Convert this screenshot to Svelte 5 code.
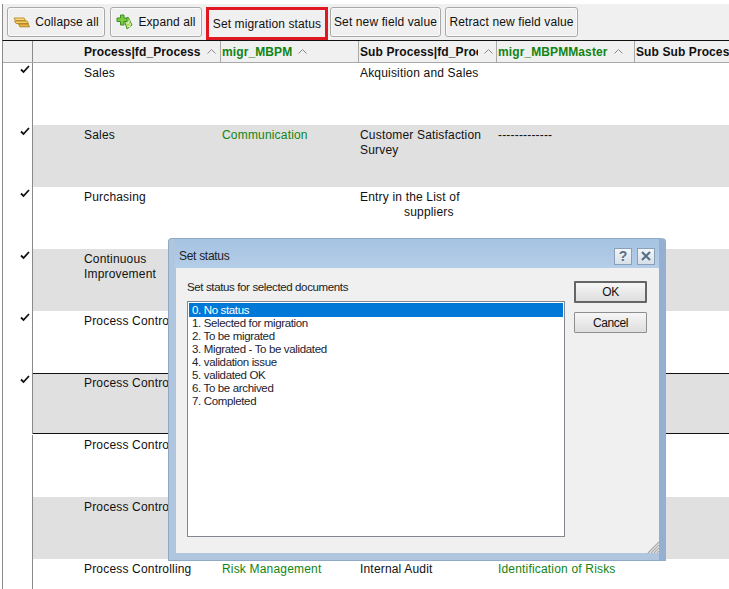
<script>
	const columns = [
		{ label: 'Process|fd_Process', width: 188, pad: 51 },
		{ label: 'migr_MBPM', width: 138, green: true },
		{ label: 'Sub Process|fd_Proc', width: 138 },
		{ label: 'migr_MBPMMaster', width: 138, green: true },
		{ label: 'Sub Sub Process', width: 120, noSort: true }
	];

	const rows = [
		{ a: 'Sales', c: 'Akquisition and Sales' },
		{ a: 'Sales', b: 'Communication', c: 'Customer Satisfaction Survey', dash: '-------------' },
		{ a: 'Purchasing', c: 'Entry in the List of', c2: 'suppliers' },
		{ a: 'Continuous Improvement' },
		{ a: 'Process Controlling' },
		{ a: 'Process Controlling', selected: true },
		{ a: 'Process Controlling', noCheck: true },
		{ a: 'Process Controlling', noCheck: true },
		{ a: 'Process Controlling', b: 'Risk Management', c: 'Internal Audit', d: 'Identification of Risks', noCheck: true }
	];

	const statuses = [
		'0. No status',
		'1. Selected for migration',
		'2. To be migrated',
		'3. Migrated - To be validated',
		'4. validation issue',
		'5. validated OK',
		'6. To be archived',
		'7. Completed'
	];

	let current = $state(0);
</script>

<div class="page">
	<div class="toolbar">
		<button class="tool collapse" type="button">
			<svg width="17" height="11" viewBox="0 0 17 11">
				<path d="M1 1 H11 L12.5 3.5 H2.5 Z" fill="#f6dc7a" stroke="#b8862a" stroke-width="0.9" />
				<path d="M1.5 4 H14 L15.5 6.5 H3 Z" fill="#f4d060" stroke="#b8862a" stroke-width="0.9" />
				<path d="M5.5 7 H15 L16.5 9.8 H7 Z" fill="#eeb840" stroke="#a87a22" stroke-width="0.9" />
			</svg>
			Collapse all
		</button>
		<button class="tool expand" type="button">
			<svg width="17" height="17" viewBox="0 0 17 17">
				<path d="M8 6 L12 3 L16 11 L11 15 Z" fill="#a6d860" stroke="#4f9a2c" stroke-width="1" />
				<path d="M4.5 1 H8 V4 H11 V7.5 H8 V11 H4.5 V7.5 H1 V4 H4.5 Z" fill="#7ccb3c" stroke="#3f8a2a" stroke-width="1" />
				<path d="M10 8 L12 10 L13.5 6.5 M11.5 12 L13.5 13 L14.5 9.5" fill="none" stroke="#e4f6c0" stroke-width="1" />
			</svg>
			Expand all
		</button>
		<button class="tool active" type="button">Set migration status</button>
		<button class="tool" style="width:111px" type="button">Set new field value</button>
		<button class="tool" style="width:133px" type="button">Retract new field value</button>
	</div>

	<div class="table">
		<div class="head">
			<div class="gutter"></div>
			{#each columns as col}
				<div class="th" class:green={col.green} style="width:{col.width}px;padding-left:{col.pad ?? 1}px">
					<span class="th-label">{col.label}</span>
					{#if !col.noSort}
						<svg class="sort" width="9" height="5" viewBox="0 0 9 5"><path d="M0.5 4.5 L4.5 0.5 L8.5 4.5" fill="none" stroke="#8a8a8a" /></svg>
					{/if}
				</div>
			{/each}
		</div>

		{#each rows as row, i}
			<div class="row" class:alt={i % 2 === 1} class:selected={row.selected}>
				<div class="gutter">
					{#if !row.noCheck}
						<svg class="check" width="10" height="9" viewBox="0 0 10 9"><path d="M1 4.5 L3.5 7 L9 1" fill="none" stroke="#111" stroke-width="1.8" /></svg>
					{/if}
				</div>
				<div class="cells">
					<div class="td first">{row.a}</div>
					<div class="td green">{row.b ?? ''}</div>
					<div class="td">
						{row.c ?? ''}
						{#if row.c2}<span class="wrapped">{row.c2}</span>{/if}
					</div>
					<div class="td last" class:green={row.d}>{row.d ?? row.dash ?? ''}</div>
				</div>
			</div>
		{/each}
	</div>

	<div class="dialog">
		<div class="titlebar">
			<span>Set status</span>
			<div class="caption-btns">
				<button class="caption" type="button">?</button>
				<button class="caption" type="button" aria-label="Close">
					<svg width="10" height="10" viewBox="0 0 10 10"><path d="M1 1 L9 9 M9 1 L1 9" stroke="#5b6f86" stroke-width="2.2" /></svg>
				</button>
			</div>
		</div>
		<div class="client">
			<div class="main">
				<p class="prompt">Set status for selected documents</p>
				<ul class="list">
					{#each statuses as s, i}
						<li class:current={current === i}>
							<button type="button" onclick={() => (current = i)}>{s}</button>
						</li>
					{/each}
				</ul>
			</div>
			<div class="actions">
				<button class="dlg-btn default" type="button">OK</button>
				<button class="dlg-btn" type="button">Cancel</button>
			</div>
			<svg class="grip" width="12" height="12" viewBox="0 0 12 12"><path d="M12 1 L1 12 M12 4 L4 12 M12 7 L7 12 M12 10 L10 12" stroke="#a8a8a8" stroke-width="1.2" /></svg>
		</div>
	</div>
</div>

<style>
	:global(body) {
		margin: 0;
		background: #fff;
	}

	.page {
		position: relative;
		width: 729px;
		height: 589px;
		overflow: hidden;
		background: #fff;
		font-family: 'Liberation Sans', Arial, sans-serif;
		font-size: 12px;
		color: #111;
	}

	.toolbar {
		display: flex;
		align-items: flex-start;
		gap: 4px;
		height: 37px;
		margin: 4px 0 0 2px;
		padding: 3px 0 0 4px;
		box-sizing: border-box;
		background: #f0f0f0;
		border-left: 1px solid #8a8a8a;
		border-bottom: 1px solid #111;
	}

	.tool {
		display: flex;
		align-items: center;
		justify-content: center;
		gap: 5px;
		height: 30px;
		padding: 0;
		box-sizing: border-box;
		background: #f0f0f0;
		border: 1px solid #a9a9a9;
		border-radius: 3px;
		box-shadow: inset 0 0 0 1px #fafafa;
		font: inherit;
		letter-spacing: 0.12px;
		color: #111;
	}

	.tool.collapse {
		width: 98px;
	}

	.tool.expand {
		width: 92px;
		margin-left: 1px;
	}

	.tool.active {
		width: 122px;
		height: 33px;
		border: 3px solid #e01822;
		border-radius: 0;
		box-shadow: none;
		margin-right: -2px;
	}

	.table {
		margin-left: 2px;
		border-left: 1px solid #8a8a8a;
	}

	.head {
		display: flex;
		height: 22px;
		background: #f0f0f0;
		border-bottom: 1px solid #a9a9a9;
		box-sizing: border-box;
	}

	.gutter {
		flex: none;
		width: 29px;
		border-right: 1px solid #8a8a8a;
		box-sizing: content-box;
	}

	.th {
		flex: none;
		display: flex;
		align-items: center;
		gap: 6px;
		box-sizing: border-box;
		border-right: 1px solid #a9a9a9;
		font-weight: bold;
		letter-spacing: 0.1px;
		white-space: nowrap;
		overflow: hidden;
	}

	.th:last-child {
		border-right: none;
		padding-left: 2px;
	}

	.th.green {
		color: #128412;
	}

	.th-label {
		flex: 0 1 auto;
		min-width: 0;
		overflow: hidden;
	}

	.sort {
		flex: none;
		margin-right: 3px;
	}

	.row {
		display: flex;
		height: 62px;
		background: #fff;
	}

	.row:first-of-type {
		height: 63px;
	}

	.row.selected {
		height: 61px;
		margin-bottom: 1px;
	}

	.check {
		display: block;
		margin: 2px 0 0 17px;
	}

	.cells {
		flex: 1;
		display: flex;
		padding-top: 3px;
		box-sizing: border-box;
	}

	.row:first-of-type .cells {
		padding-top: 4px;
	}

	.row.alt .cells {
		background: #e0e0e0;
	}

	.row.selected .cells {
		border-top: 1px solid #111;
		border-bottom: 1px solid #111;
		padding-top: 2px;
	}

	.td {
		flex: none;
		width: 138px;
		padding: 0 8px 0 1px;
		box-sizing: border-box;
		line-height: 15px;
		letter-spacing: 0.18px;
	}

	.td.first {
		width: 188px;
		padding-left: 51px;
		padding-right: 18px;
	}

	.td.last {
		width: 170px;
	}

	.td.green {
		color: #128412;
	}

	.wrapped {
		display: block;
		padding-left: 44px;
	}

	.dialog {
		position: absolute;
		left: 168px;
		top: 238px;
		width: 498px;
		height: 323px;
		box-sizing: border-box;
		display: flex;
		flex-direction: column;
		padding: 0 0 7px 7px;
		background: #b0c6df;
		border: 1px solid #8fa9c6;
		border-right: 7px solid #94afcf;
		border-radius: 4px 4px 0 0;
	}

	.titlebar {
		flex: none;
		display: flex;
		align-items: center;
		justify-content: space-between;
		height: 29px;
		padding: 5px 4px 0 4px;
		box-sizing: border-box;
		margin-left: -1px;
		background: linear-gradient(#a6c3e2, #b4cde8);
		letter-spacing: -0.3px;
		color: #222;
	}

	.caption-btns {
		display: flex;
		gap: 5px;
	}

	.caption {
		display: flex;
		align-items: center;
		justify-content: center;
		width: 18px;
		height: 17px;
		padding: 0;
		background: linear-gradient(#f2f5f8, #d8e0e8);
		border: 1px solid #8aa0b8;
		font: bold 14px 'Liberation Sans', Arial, sans-serif;
		color: #5b6f86;
	}

	.client {
		position: relative;
		flex: 1;
		display: flex;
		gap: 9px;
		padding: 12px 12px 16px 11px;
		background: #f0f0f0;
		min-height: 0;
	}

	.main {
		flex: 1;
		display: flex;
		flex-direction: column;
		min-width: 0;
	}

	.prompt {
		margin: 0 0 7px;
		font-size: 11.5px;
		line-height: 14px;
		letter-spacing: -0.37px;
		color: #222;
	}

	.list {
		flex: 1;
		margin: 0;
		padding: 1px;
		list-style: none;
		background: #fff;
		border: 1px solid #828790;
	}

	.list li {
		height: 13px;
	}

	.list li:first-child {
		height: 14px;
	}

	.list button {
		display: block;
		width: 100%;
		height: 13px;
		padding: 0 3px;
		border: none;
		background: none;
		text-align: left;
		font: 11.5px/13px 'Liberation Sans', Arial, sans-serif;
		letter-spacing: -0.35px;
		color: #1c2230;
	}

	.list li:first-child button {
		height: 14px;
		line-height: 15px;
	}

	.list .current button {
		background: #0078d7;
		color: #fff;
	}

	.actions {
		flex: none;
		display: flex;
		flex-direction: column;
		gap: 9px;
		width: 73px;
		padding-top: 1px;
	}

	.dlg-btn {
		height: 21px;
		padding: 0;
		background: linear-gradient(#f6f6f6, #dedede);
		border: 1px solid #8f8f8f;
		border-radius: 1px;
		font: 12px 'Liberation Sans', Arial, sans-serif;
		letter-spacing: -0.4px;
		color: #111;
	}

	.dlg-btn.default {
		height: 22px;
		border: 2px solid #666;
	}

	.grip {
		position: absolute;
		right: 0;
		bottom: 0;
	}
</style>
